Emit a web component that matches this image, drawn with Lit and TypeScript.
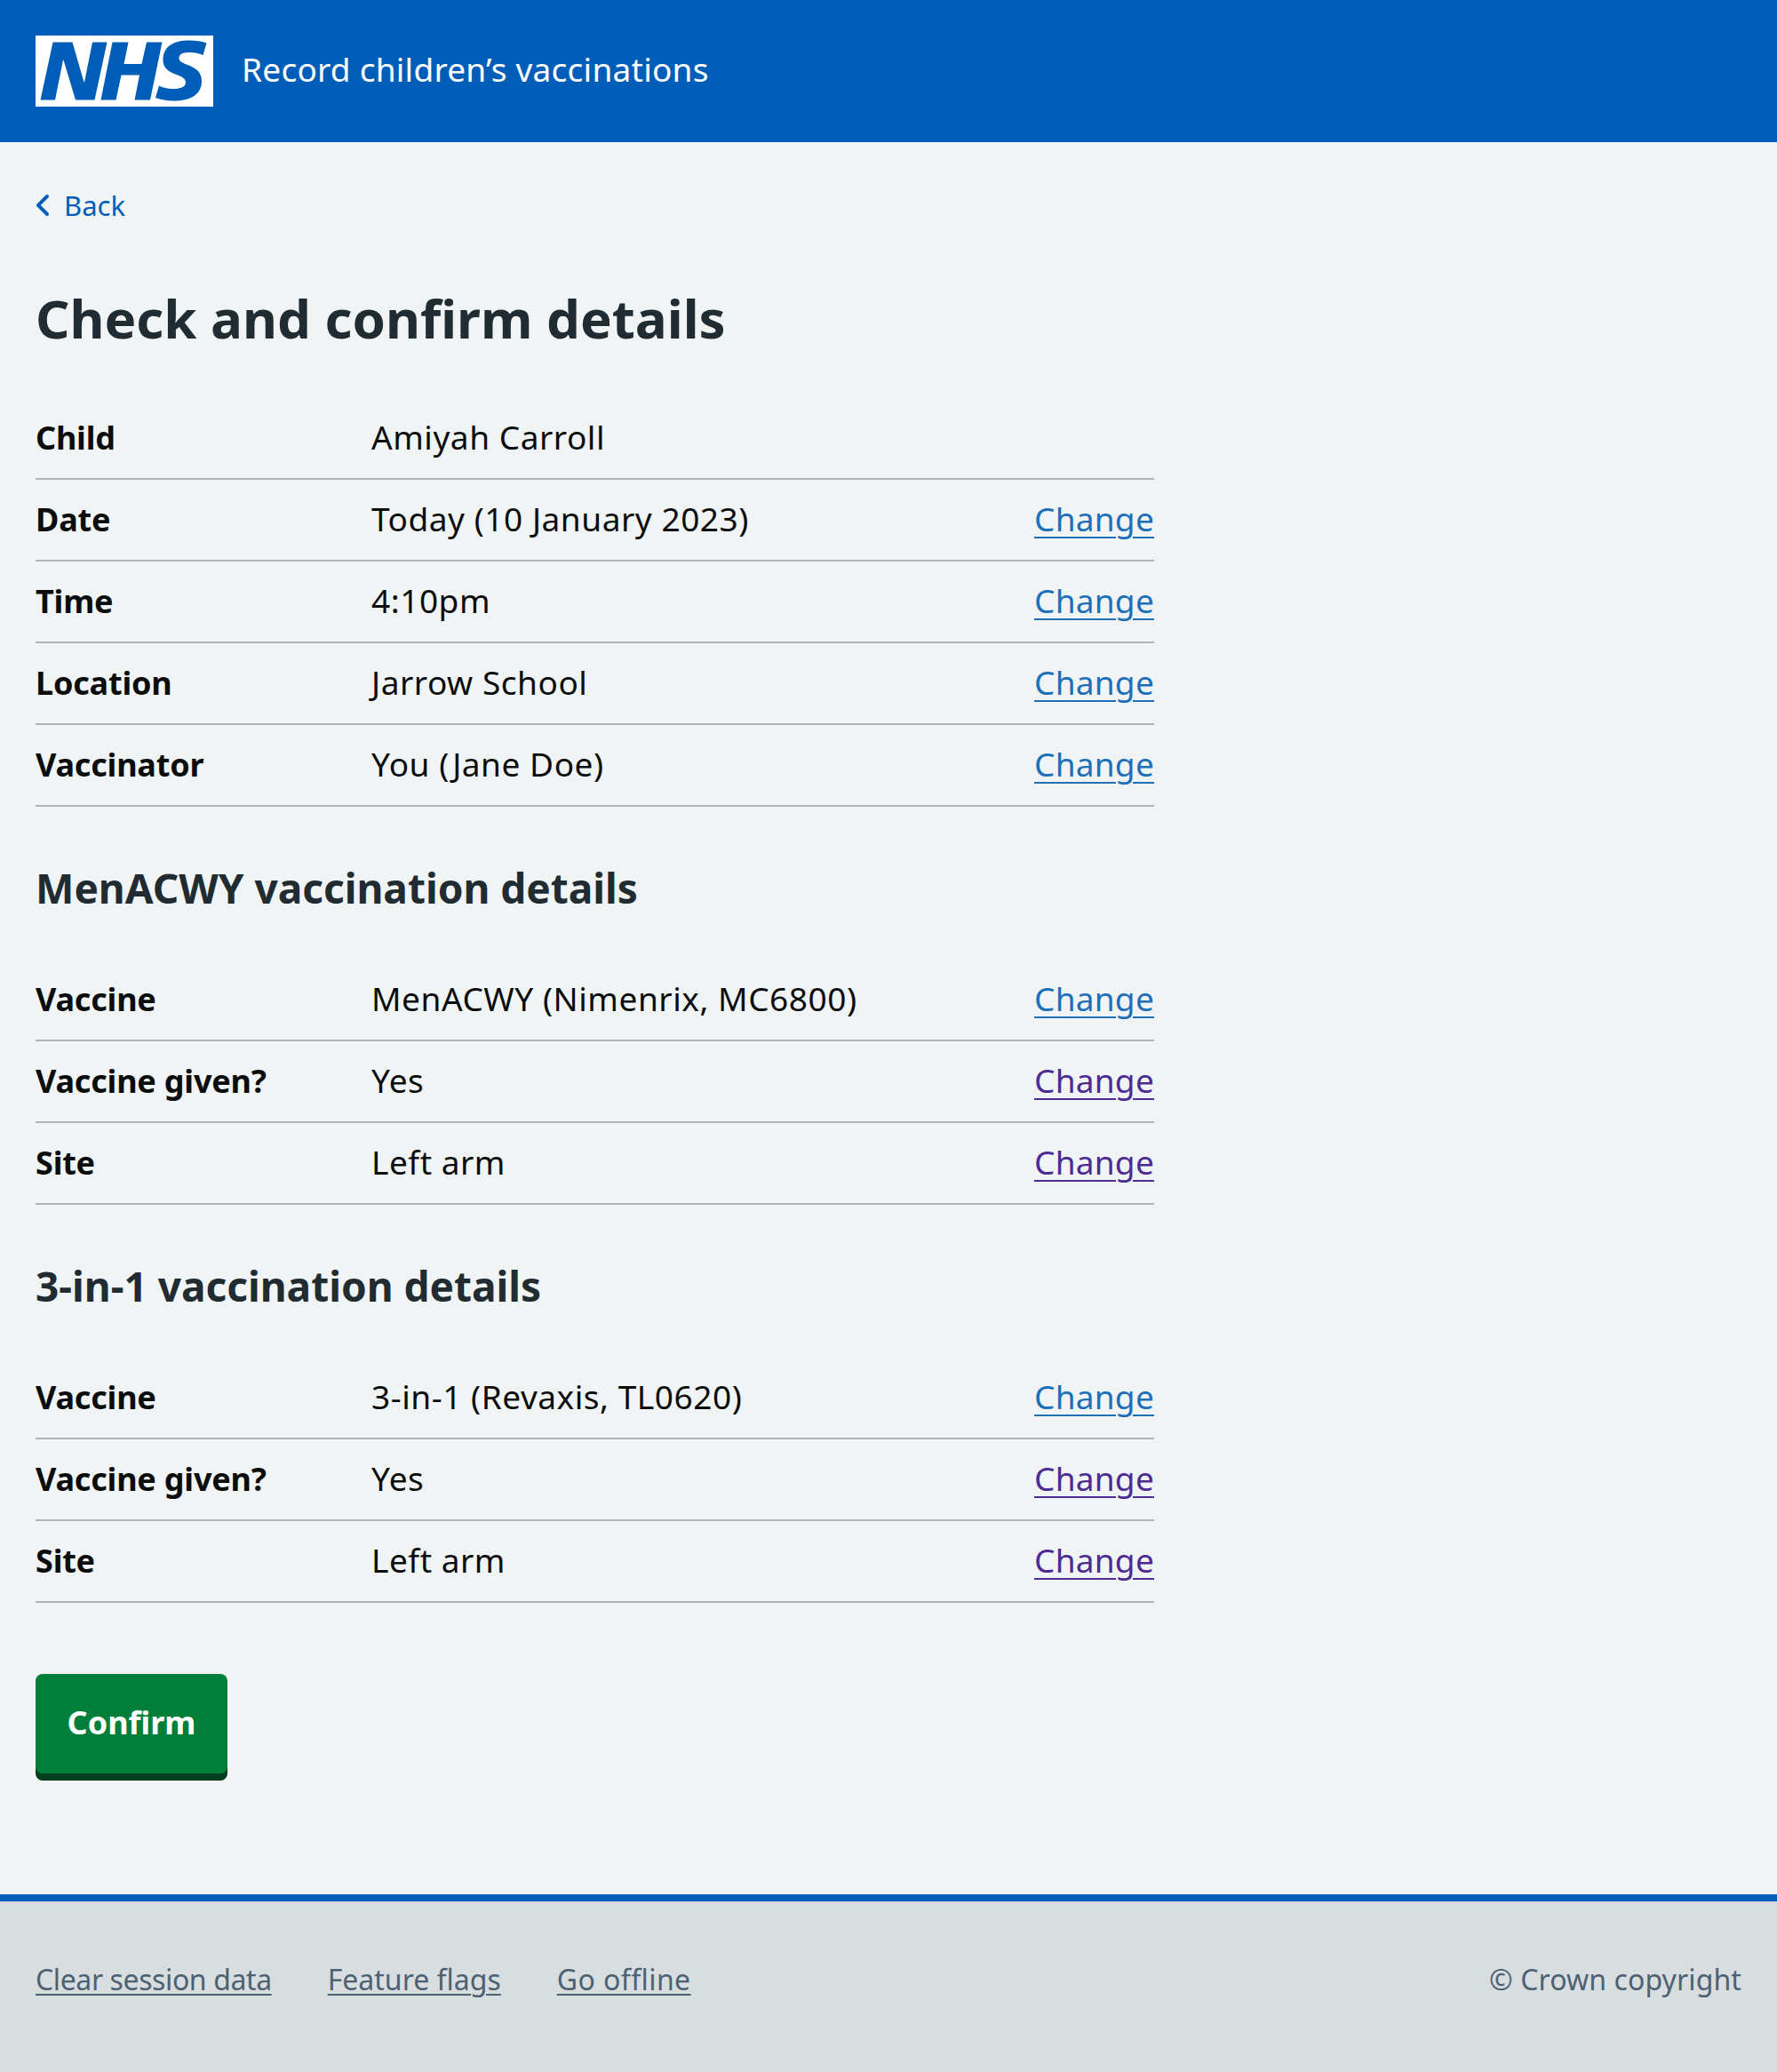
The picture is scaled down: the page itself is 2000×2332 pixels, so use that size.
import { LitElement, html, css, svg } from 'lit';
import { customElement } from 'lit/decorators.js';

type Row = { key: string; value: string; change?: boolean; visited?: boolean };

const intro: Row[] = [
  { key: 'Child', value: 'Amiyah Carroll' },
  { key: 'Date', value: 'Today (10 January 2023)', change: true },
  { key: 'Time', value: '4:10pm', change: true },
  { key: 'Location', value: 'Jarrow School', change: true },
  { key: 'Vaccinator', value: 'You (Jane Doe)', change: true },
];

const menacwy: Row[] = [
  { key: 'Vaccine', value: 'MenACWY (Nimenrix, MC6800)', change: true },
  { key: 'Vaccine given?', value: 'Yes', change: true, visited: true },
  { key: 'Site', value: 'Left arm', change: true, visited: true },
];

const threeInOne: Row[] = [
  { key: 'Vaccine', value: '3-in-1 (Revaxis, TL0620)', change: true },
  { key: 'Vaccine given?', value: 'Yes', change: true, visited: true },
  { key: 'Site', value: 'Left arm', change: true, visited: true },
];

const nhsLogo = svg`
  <path fill="#fff" d="M0 0h40v16H0z"></path>
  <path fill="#005eb8" d="M3.9 1.5h4.4l2.6 9h.1l1.8-9h3.3l-2.8 13H9l-2.7-9h-.1l-1.8 9H1.1M17.3 1.5h3.6l-1 4.9h4L25 1.5h3.5l-2.7 13h-3.5l1.1-5.6h-4.1l-1.2 5.6h-3.4M37.7 4.4c-.7-.3-1.6-.6-2.9-.6-1.4 0-2.5.2-2.5 1.3 0 1.8 5.1 1.2 5.1 5.1 0 3.6-3.3 4.5-6.4 4.5-1.3 0-2.9-.3-4-.7l.8-2.7c.7.4 2.1.7 3.2.7s2.8-.2 2.8-1.5c0-2.1-5.1-1.3-5.1-5 0-3.4 2.9-4.4 5.8-4.4 1.6 0 3.1.2 4 .6"></path>
`;

@customElement('app-root')
export class AppRoot extends LitElement {
  static styles = css`
    :host {
      display: block;
      background: #f0f4f5;
      color: #0b0c0c;
      font-family: 'Noto Sans', sans-serif;
      font-size: 37px;
      line-height: 56px;
    }

    .header {
      display: flex;
      align-items: center;
      gap: 32px;
      height: 160px;
      box-sizing: border-box;
      padding: 0 40px;
      background: #005eb8;
      color: #fff;
    }

    .logo {
      display: block;
      width: 200px;
      height: 80px;
    }

    .service {
      margin-top: -4px;
      letter-spacing: 0.25px;
    }

    .main {
      padding: 0 40px;
    }

    .back {
      display: flex;
      align-items: center;
      height: 48px;
      margin: 39px 0 0 -16px;
      padding-top: 8px;
      color: #005eb8;
      font-size: 31px;
    }

    .back svg {
      width: 48px;
      height: 48px;
      fill: currentColor;
    }

    h1 {
      margin: 67px 0 54px;
      color: #212b32;
      font-size: 60px;
      line-height: 72px;
      font-weight: 700;
    }

    h2 {
      margin: 63px 0 53px;
      color: #212b32;
      font-size: 46px;
      line-height: 56px;
      font-weight: 700;
    }

    .list {
      width: 1259px;
    }

    .row {
      display: grid;
      grid-template-columns: 378px 1fr auto;
      height: 92px;
      box-sizing: border-box;
      align-items: center;
      border-bottom: 2px solid #b1b4b6;
    }

    .key {
      font-size: 36px;
      font-weight: 700;
      letter-spacing: -0.2px;
    }

    .value {
      padding-bottom: 2px;
      letter-spacing: 0.55px;
    }

    .change {
      padding-bottom: 2px;
      color: #1d70b8;
      letter-spacing: 0.25px;
      text-decoration: underline;
      text-decoration-thickness: 2px;
      text-underline-offset: 6px;
    }

    .change.visited {
      color: #4c2c92;
    }

    .confirm {
      display: block;
      width: 216px;
      height: 112px;
      margin: 80px 0 136px;
      padding: 0 0 2px;
      border: 0;
      border-radius: 8px;
      background: #007f3b;
      box-shadow: 0 8px 0 #00401e;
      color: #fff;
      font: inherit;
      font-size: 36px;
      font-weight: 700;
    }

    .footer {
      display: flex;
      align-items: center;
      justify-content: space-between;
      height: 200px;
      box-sizing: border-box;
      padding: 0 40px 16px;
      border-top: 8px solid #005eb8;
      background: #d8dde0;
      color: #4c6272;
      font-size: 32px;
      line-height: 48px;
    }

    .footer-links {
      display: flex;
      gap: 63px;
    }

    .footer-links a {
      text-decoration: underline;
      text-decoration-thickness: 2px;
      text-underline-offset: 4px;
    }

    .footer-links a:first-child {
      letter-spacing: -0.4px;
    }

    .footer-links a:last-child {
      letter-spacing: 0.4px;
    }

    .copyright {
      letter-spacing: 0.1px;
    }
  `;

  private renderList(rows: Row[]) {
    return html`
      <div class="list">
        ${rows.map(
          (row) => html`
            <div class="row">
              <div class="key">${row.key}</div>
              <div class="value">${row.value}</div>
              ${row.change
                ? html`<a class="change ${row.visited ? 'visited' : ''}">Change</a>`
                : html`<span></span>`}
            </div>
          `,
        )}
      </div>
    `;
  }

  render() {
    return html`
      <header class="header">
        <svg class="logo" viewBox="0 0 40 16" role="img" aria-label="NHS">${nhsLogo}</svg>
        <div class="service">Record children’s vaccinations</div>
      </header>
      <main class="main">
        <a class="back">
          <svg viewBox="0 0 24 24" aria-hidden="true">
            <path d="M8.5 12c0-.3.1-.5.3-.7l5-5c.4-.4 1-.4 1.4 0s.4 1 0 1.4L10.9 12l4.3 4.3c.4.4.4 1 0 1.4s-1 .4-1.4 0l-5-5c-.2-.2-.3-.4-.3-.7z"></path>
          </svg>
          Back
        </a>
        <h1>Check and confirm details</h1>
        ${this.renderList(intro)}
        <h2>MenACWY vaccination details</h2>
        ${this.renderList(menacwy)}
        <h2>3-in-1 vaccination details</h2>
        ${this.renderList(threeInOne)}
        <button class="confirm">Confirm</button>
      </main>
      <footer class="footer">
        <div class="footer-links">
          <a>Clear session data</a>
          <a>Feature flags</a>
          <a>Go offline</a>
        </div>
        <div class="copyright">© Crown copyright</div>
      </footer>
    `;
  }
}
